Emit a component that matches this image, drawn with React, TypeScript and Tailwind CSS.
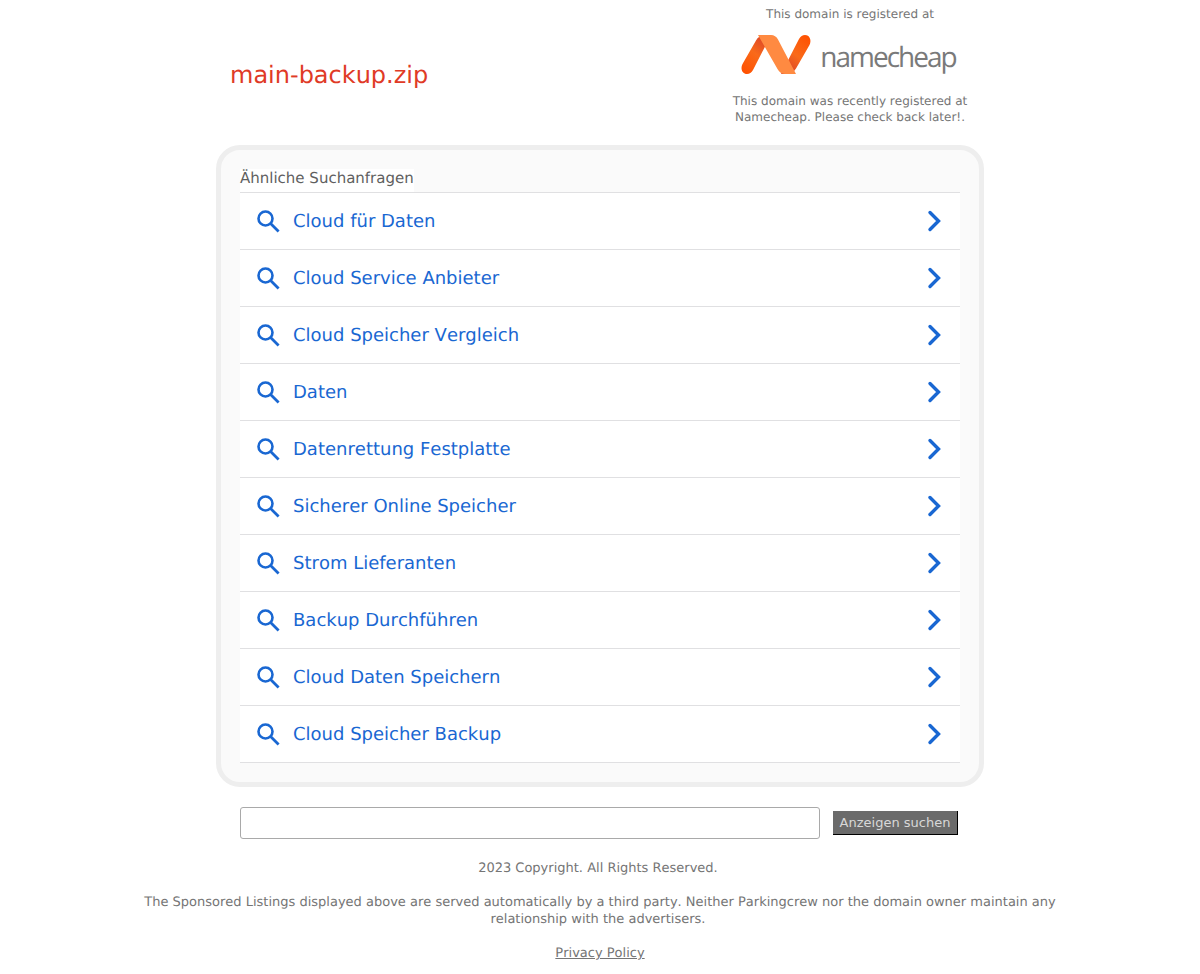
const terms = [
  "Cloud für Daten",
  "Cloud Service Anbieter",
  "Cloud Speicher Vergleich",
  "Daten",
  "Datenrettung Festplatte",
  "Sicherer Online Speicher",
  "Strom Lieferanten",
  "Backup Durchführen",
  "Cloud Daten Speichern",
  "Cloud Speicher Backup",
];

function SearchIcon() {
  return (
    <svg width="24" height="24" viewBox="0 0 24 24" fill="none" stroke="#1967d2" strokeWidth="2.6" className="shrink-0">
      <circle cx="9.5" cy="9.5" r="7" />
      <path d="M14.6 14.6L22.6 22.6" strokeWidth="2.8" />
    </svg>
  );
}

function ChevronIcon() {
  return (
    <svg width="16" height="22" viewBox="0 0 16 22" fill="none" stroke="#1967d2" strokeWidth="3.4" strokeLinecap="round" strokeLinejoin="miter" className="shrink-0">
      <path d="M3 2.5L11.5 11L3 19.5" />
    </svg>
  );
}

function Logo() {
  return (
    <div className="flex items-center h-[76px] ml-[-3px]">
      <svg width="71" height="39" viewBox="0 0 71 39" className="shrink-0 mt-[3px]">
        <defs>
          <linearGradient id="left" x1="0.1" y1="1" x2="0.7" y2="0">
            <stop offset="0" stopColor="#ff5000" />
            <stop offset="0.55" stopColor="#f96a1a" />
            <stop offset="1" stopColor="#d9432a" />
          </linearGradient>
          <linearGradient id="right" x1="0.9" y1="0" x2="0.3" y2="1">
            <stop offset="0" stopColor="#ff5000" />
            <stop offset="0.55" stopColor="#f96a1a" />
            <stop offset="1" stopColor="#d9432a" />
          </linearGradient>
        </defs>
        <path d="M1.5 29L15 5.5C17 2 20 0 24 0L30 0L12 35C10.5 37.5 8.5 39 6 39C1.5 39 -1 34 1.5 29Z" fill="url(#left)" />
        <path d="M68.5 10L55 33.5C53 37 50 39 46 39L40 39L58 4C59.5 1.5 61.5 0 64 0C68.5 0 71 5 68.5 10Z" fill="url(#right)" />
        <path d="M17 0L30 0C33 0 35.5 1.5 37 4.5L55 39L44 39C41 39 38 37 36.5 34Z" fill="#ff8a41" />
      </svg>
      <span className="ml-[8px] mt-[8px] text-[28px] tracking-[-2px] text-[#7a7a7a] font-['Open_Sans',sans-serif] font-normal leading-none">namecheap</span>
    </div>
  );
}

export default function App() {
  return (
    <div className="bg-white min-h-[974px] font-['DejaVu_Sans',sans-serif] [font-kerning:none] [text-rendering:geometricPrecision] text-[#757575]">
      <div className="w-[760px] mx-auto flex h-[145px]">
        <div className="w-[380px] pl-[10px] pt-[59px] text-[24px] leading-[32px] text-[#e03a26]">main-backup.zip</div>
        <div className="w-[260px] ml-[120px] mr-[-40px] text-center text-[12px] leading-[16px] pt-[6px]">
          <p>This domain is registered at</p>
          <div className="flex justify-center mt-[-7px]"><Logo /></div>
          <p className="mt-[2px]">This domain was recently registered at<br />Namecheap. Please check back later!.</p>
        </div>
      </div>

      <div className="w-[768px] h-[642px] mx-auto border-[5px] border-[#eeeeee] rounded-[24px] bg-[#fafafa] px-[19px] pt-[19px]">
        <div className="w-fit bg-white text-[15px] leading-[18px] pb-[5px] text-[#5f5f5f] h-[23px]">Ähnliche Suchanfragen</div>
        <ul className="bg-white border-t border-[#e0e0e2]">
          {terms.map((term) => (
            <li key={term} className="h-[57px] border-b border-[#e0e0e2] flex items-center pl-[16px] pr-[17px]">
              <SearchIcon />
              <span className="ml-[13px] flex-1 text-[18px] text-[#1967d2]">{term}</span>
              <ChevronIcon />
            </li>
          ))}
        </ul>
      </div>

      <div className="w-[720px] mx-auto mt-[20px] flex items-center h-[32px]">
        <input className="w-[580px] h-[32px] border border-[#a9a9a9] rounded-[3px] bg-white" />
        <button className="ml-[13px] w-[125px] h-[24px] bg-[#6b6b6b] border-r border-b border-black text-[13px] text-[#d8d8d8]">Anzeigen suchen</button>
      </div>

      <div className="w-[920px] mx-auto mt-[21px] text-center text-[13px] leading-[17px]">
        <p>2023 Copyright. All Rights Reserved.&nbsp;</p>
        <p className="mt-[17px]">The Sponsored Listings displayed above are served automatically by a third party. Neither Parkingcrew nor the domain owner maintain any relationship with the advertisers.&nbsp;</p>
        <p className="mt-[17px]"><a className="underline">Privacy Policy</a></p>
      </div>
    </div>
  );
}
